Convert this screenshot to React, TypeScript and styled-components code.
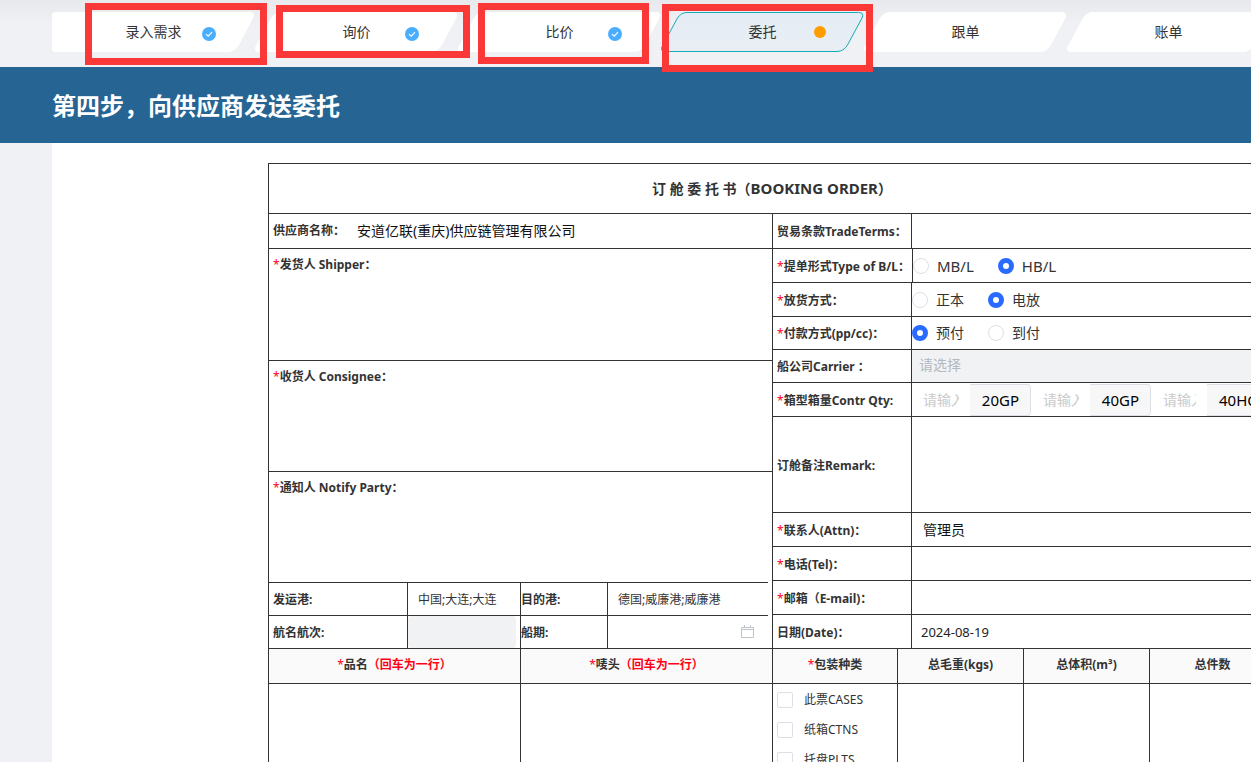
import React from 'react';
import styled, { createGlobalStyle, css } from 'styled-components';

const LINE = '#333333';
const BACKDROP = '#f0f1f5';
const MUTED = '#f1f2f4';
const FIELD_BORDER = '#dcdfe6';

const GlobalStyle = createGlobalStyle`
  *, *::before, *::after { box-sizing: border-box; }
  body {
    margin: 0;
    background: ${BACKDROP};
    color: #333;
    font-family: "Noto Sans", "Noto Sans CJK SC", sans-serif;
    font-size: 12px;
    line-height: 16px;
  }
  input, textarea, select, button { font: inherit; color: inherit; }
`;

const Page = styled.div`
  position: relative;
  height: 100vh;
  overflow: auto;
  scrollbar-width: none;
`;

const Canvas = styled.div`
  min-width: 1536px;
`;

/* ---------- step bar ---------- */

const StepBar = styled.nav`
  background: linear-gradient(#e8e9ed, ${BACKDROP} 24px);
  padding: 12px 52px 15px;
`;

const StepList = styled.ol`
  display: flex;
  margin: 0;
  padding: 0;
  list-style: none;
`;

const StepItem = styled.li`
  flex: 0 0 203px;
`;

const StepButton = styled.button`
  position: relative;
  display: grid;
  place-items: center;
  width: 100%;
  height: 40px;
  padding: 0;
  border: 0;
  background: none;
  font-size: 14px;
  line-height: 20px;
  cursor: pointer;
`;

const StepShape = styled.svg`
  position: absolute;
  inset: 0;
  width: 100%;
  height: 100%;
`;

const StepLabel = styled.span`
  position: relative;
`;

const StepBadge = styled.span<{ $kind: 'done' | 'current' }>`
  position: absolute;
  right: ${p => (p.$kind === 'done' ? 39 : 38)}px;
  top: ${p => (p.$kind === 'done' ? 15 : 14)}px;
  display: block;
  width: ${p => (p.$kind === 'done' ? 14 : 12)}px;
  height: ${p => (p.$kind === 'done' ? 14 : 12)}px;
  border-radius: 50%;
  background: ${p => (p.$kind === 'done' ? '#4aaeff' : '#ff9c00')};
  svg { display: block; }
`;

const Marker = styled.div<{ $x: number; $y: number; $w: number; $h: number }>`
  position: absolute;
  left: ${p => p.$x}px;
  top: ${p => p.$y}px;
  width: ${p => p.$w}px;
  height: ${p => p.$h}px;
  border: 7px solid #fb3838;
  pointer-events: none;
`;

/* ---------- banner ---------- */

const Banner = styled.header`
  padding: 21px 52px 19px;
  background: #266493;
`;

const BannerTitle = styled.h1`
  margin: 0;
  color: #fff;
  font-size: 24px;
  line-height: 36px;
  font-weight: 700;
`;

/* ---------- booking form ---------- */

const Sheet = styled.main`
  margin: 0 52px;
  padding: 20px 208px 20px 216px;
  background: #fff;
`;

const Order = styled.form`
  border: 1px solid ${LINE};
`;

const OrderTitle = styled.h2`
  margin: 0;
  padding: 15px 0 14px;
  border-bottom: 1px solid ${LINE};
  font-size: 14px;
  line-height: 20px;
  font-weight: 700;
  text-align: center;
`;

const TitleLatin = styled.span`
  font-size: 15px;
  line-height: 16px;
`;

const Columns = styled.div`
  display: grid;
  grid-template-columns: 504px 1fr;
`;

const LeftColumn = styled.div`
  border-right: 1px solid ${LINE};
`;

const RightColumn = styled.div`
  min-width: 0;
`;

const Star = styled.span`
  color: #ff0016;
  font-weight: 400;
`;

const Hint = styled.span`
  color: #ff0016;
`;

const labelText = css`
  font-size: 12px;
  line-height: 16px;
  font-weight: 700;
  white-space: nowrap;
`;

const SupplierRow = styled.div`
  display: grid;
  grid-template-columns: 73px 1fr;
  align-items: center;
  height: 35px;
  border-bottom: 1px solid ${LINE};
  padding-left: 4px;
`;

const Label = styled.label`
  ${labelText}
`;

const TextField = styled.input<{ $small?: boolean }>`
  width: 100%;
  min-width: 0;
  height: 100%;
  padding: ${p => (p.$small ? '0 10px' : '0 11px 2px')};
  border: 0;
  outline: 0;
  background: transparent;
  color: ${p => (p.$small ? '#333' : '#111')};
  font-size: ${p => (p.$small ? 12 : 14)}px;
`;

const Party = styled.div<{ $h: number; $inset?: boolean }>`
  display: flex;
  flex-direction: column;
  height: ${p => p.$h}px;
  margin-right: ${p => (p.$inset ? 4 : 0)}px;
  padding: 8px 4px 4px;
  border-bottom: 1px solid ${LINE};
`;

const Area = styled.textarea`
  display: block;
  flex: 1;
  width: 100%;
  height: 100%;
  padding: 4px 12px;
  border: 0;
  outline: 0;
  resize: none;
  background: transparent;
`;

const PortRow = styled.div<{ $last?: boolean }>`
  display: grid;
  grid-template-columns: 139px 113px 87px 1fr;
  height: 33px;
  margin-right: ${p => (p.$last ? 0 : 4)}px;
  border-bottom: 1px solid ${LINE};
`;

const PortCell = styled.div<{ $pad?: number; $open?: boolean }>`
  display: flex;
  align-items: center;
  min-width: 0;
  padding-left: ${p => p.$pad ?? 0}px;
  border-right: ${p => (p.$open ? 0 : 1)}px solid ${LINE};
  label { padding-top: 2px; }
`;

const DisabledField = styled.input`
  width: 108px;
  height: 32px;
  border: 0;
  border-radius: 4px;
  background: ${MUTED};
`;

const CalendarButton = styled.button`
  flex: none;
  width: 14px;
  height: 14px;
  margin-right: 17px;
  padding: 0;
  border: 0;
  background: none;
  svg { display: block; }
`;

const FieldRow = styled.div<{ $h: number; $labelWidth?: number }>`
  display: grid;
  grid-template-columns: ${p => p.$labelWidth ?? 139}px 1fr;
  height: ${p => p.$h}px;
  border-bottom: 1px solid ${LINE};
`;

const FieldName = styled.div`
  display: flex;
  align-items: center;
  padding: 2px 0 0 4px;
  border-right: 1px solid ${LINE};
  ${labelText}
`;

const FieldValue = styled.div`
  display: flex;
  align-items: center;
  min-width: 0;
`;

const RadioGroup = styled.div<{ $latin?: boolean }>`
  display: flex;
  gap: 24px;
  font-size: ${p => (p.$latin ? 15 : 14)}px;
  line-height: 20px;
`;

const RadioLabel = styled.label`
  display: flex;
  align-items: center;
  gap: 8px;
`;

const Radio = styled.input`
  appearance: none;
  width: 16px;
  height: 16px;
  margin: 0;
  border: 1px solid ${FIELD_BORDER};
  border-radius: 50%;
  background: #fff;
  &:checked { border: 5px solid #2a6bff; }
`;

const CarrierSelect = styled.select`
  appearance: none;
  width: 100%;
  height: 100%;
  padding: 0 7px 2px;
  border: 0;
  background: ${MUTED};
  color: #b4b8c0;
  font-size: 14px;
  opacity: 1;
`;

const Quantities = styled.div`
  display: flex;
  gap: 1px;
  width: 100%;
  height: 100%;
  padding-top: 1px;
`;

const Quantity = styled.div`
  display: flex;
  flex: 0 0 119px;
`;

const QuantityInput = styled.input`
  flex: 1;
  width: 0;
  min-width: 0;
  padding: 0 11px;
  border: 0;
  outline: 0;
  background: transparent;
  font-size: 14px;
  &::placeholder { color: #cacaca; }
`;

const QuantityUnit = styled.label`
  display: flex;
  align-items: center;
  padding: 0 11px 0 12px;
  border: 1px solid ${FIELD_BORDER};
  border-left: 0;
  border-radius: 0 4px 4px 0;
  background: #f7f7f7;
  color: #000;
  font-size: 15px;
`;

const DateText = styled(TextField)`
  padding: 0 9px;
  color: #222;
  font-size: 13px;
`;

/* ---------- goods table ---------- */

const Goods = styled.table`
  width: 100%;
  table-layout: fixed;
  border-spacing: 0;
`;

const GoodsHead = styled.th<{ $w?: number }>`
  width: ${p => (p.$w ? `${p.$w}px` : 'auto')};
  height: 35px;
  padding: 0 0 2px;
  border-bottom: 1px solid ${LINE};
  background: #fafafa;
  text-align: center;
  ${labelText}
  & + & { border-left: 1px solid ${LINE}; }
`;

const GoodsCell = styled.td`
  height: 220px;
  padding: 8px 4px;
  vertical-align: top;
  & + & { border-left: 1px solid ${LINE}; }
`;

const CheckList = styled.div`
  display: flex;
  flex-direction: column;
  gap: 14px;
`;

const CheckLabel = styled.label`
  display: flex;
  align-items: center;
  gap: 11px;
  white-space: nowrap;
`;

const Check = styled.input`
  appearance: none;
  flex: none;
  width: 16px;
  height: 16px;
  margin: 0;
  border: 1px solid ${FIELD_BORDER};
  border-radius: 2px;
  background: #fff;
  &:checked { background: #2a6bff; }
`;

type StepState = 'done' | 'current' | 'todo';

const steps: { name: string; state: StepState }[] = [
  { name: '录入需求', state: 'done' },
  { name: '询价', state: 'done' },
  { name: '比价', state: 'done' },
  { name: '委托', state: 'current' },
  { name: '跟单', state: 'todo' },
  { name: '账单', state: 'todo' },
];

const FIRST_SHAPE =
  'M4 0H198Q203.500 0 201.500 5L187 33Q183 40 176 40H4Q0 40 0 36V4Q0 0 4 0Z';
const SLANTED_SHAPE =
  'M26 .5H197.500Q203.500 .5 201 6L186.500 33Q182.500 39.500 176 39.500H4Q-1 39.500 1 34.500L16.500 6Q20 .5 26 .5Z';

const Step = ({ name, state, first }: { name: string; state: StepState; first: boolean }) => (
  <StepItem>
    <StepButton type="button" aria-current={state === 'current' ? 'step' : undefined}>
      <StepShape viewBox="0 0 203 40" preserveAspectRatio="none" aria-hidden="true">
        <defs>
          <linearGradient id="currentFill" x1="0" y1="0" x2="0" y2="1">
            <stop offset="0" stopColor="#e4ecf5" />
            <stop offset="1" stopColor="#e9eef4" />
          </linearGradient>
        </defs>
        <path
          d={first ? FIRST_SHAPE : SLANTED_SHAPE}
          fill={state === 'current' ? 'url(#currentFill)' : '#fff'}
          stroke={state === 'current' ? '#14abb4' : '#fff'}
          strokeWidth={first ? 0 : 1}
        />
      </StepShape>
      <StepLabel>{name}</StepLabel>
      {state === 'done' && (
        <StepBadge $kind="done">
          <svg width="14" height="14" viewBox="0 0 14 14" aria-hidden="true">
            <path d="M4 7.200l2.200 2L10 5.200" fill="none" stroke="#fff" strokeWidth="1.100" />
          </svg>
        </StepBadge>
      )}
      {state === 'current' && <StepBadge $kind="current" />}
    </StepButton>
  </StepItem>
);

const RadioRow = ({
  h, name, title, options, value, labelWidth, latin,
}: {
  h: number; name: string; title: string; options: string[]; value: string;
  labelWidth?: number; latin?: boolean;
}) => (
  <FieldRow $h={h} $labelWidth={labelWidth}>
    <FieldName id={`${name}-title`}><Star>*</Star>{title}</FieldName>
    <FieldValue>
      <RadioGroup $latin={latin} role="radiogroup" aria-labelledby={`${name}-title`}>
        {options.map(option => (
          <RadioLabel key={option}>
            <Radio type="radio" name={name} value={option} defaultChecked={option === value} />
            {option}
          </RadioLabel>
        ))}
      </RadioGroup>
    </FieldValue>
  </FieldRow>
);

const TextRow = ({
  id, title, required, h = 34, value = '',
}: {
  id: string; title: string; required?: boolean; h?: number; value?: string;
}) => (
  <FieldRow $h={h}>
    <FieldName>
      <Label htmlFor={id}>{required && <Star>*</Star>}{title}</Label>
    </FieldName>
    <FieldValue><TextField id={id} defaultValue={value} /></FieldValue>
  </FieldRow>
);

const PartyBox = ({
  id, title, h, inset,
}: {
  id: string; title: string; h: number; inset?: boolean;
}) => (
  <Party $h={h} $inset={inset}>
    <Label htmlFor={id}><Star>*</Star>{title}</Label>
    <Area id={id} />
  </Party>
);

export default function App() {
  return (
    <Page>
      <GlobalStyle />
      <Canvas>
        <StepBar>
          <StepList>
            {steps.map((s, i) => (
              <Step key={s.name} name={s.name} state={s.state} first={i === 0} />
            ))}
          </StepList>
        </StepBar>
        <Banner>
          <BannerTitle>第四步，向供应商发送委托</BannerTitle>
        </Banner>
        <Sheet>
          <Order>
            <OrderTitle>订 舱 委 托 书（<TitleLatin>BOOKING ORDER</TitleLatin>）</OrderTitle>
            <Columns>
              <LeftColumn>
                <SupplierRow>
                  <Label htmlFor="supplier">供应商名称：</Label>
                  <TextField id="supplier" defaultValue="安道亿联(重庆)供应链管理有限公司" />
                </SupplierRow>
                <PartyBox id="shipper" title="发货人 Shipper：" h={112} />
                <PartyBox id="consignee" title="收货人 Consignee：" h={111} />
                <PartyBox id="notify" title="通知人 Notify Party：" h={111} inset />
                <PortRow>
                  <PortCell $pad={4}><Label htmlFor="pol">发运港:</Label></PortCell>
                  <PortCell><TextField $small id="pol" defaultValue="中国;大连;大连" /></PortCell>
                  <PortCell><Label htmlFor="pod">目的港:</Label></PortCell>
                  <PortCell $open><TextField $small id="pod" defaultValue="德国;威廉港;威廉港" /></PortCell>
                </PortRow>
                <PortRow $last>
                  <PortCell $pad={4}><Label htmlFor="voyage">航名航次:</Label></PortCell>
                  <PortCell><DisabledField id="voyage" disabled /></PortCell>
                  <PortCell><Label htmlFor="sailing">船期:</Label></PortCell>
                  <PortCell $open>
                    <TextField $small id="sailing" />
                    <CalendarButton type="button" aria-label="船期">
                      <svg width="14" height="14" viewBox="0 0 14 14" aria-hidden="true">
                        <path
                          d="M.5 2.500h12v10H.5zM.5 4.500h12M3.500 0v2M9.500 0v2"
                          fill="none"
                          stroke="#c0c4cc"
                        />
                      </svg>
                    </CalendarButton>
                  </PortCell>
                </PortRow>
              </LeftColumn>
              <RightColumn>
                <TextRow id="terms" title="贸易条款TradeTerms：" h={35} />
                <RadioRow h={34} labelWidth={140} latin name="bl" title="提单形式Type of B/L：" options={['MB/L', 'HB/L']} value="HB/L" />
                <RadioRow h={34} name="release" title="放货方式：" options={['正本', '电放']} value="电放" />
                <RadioRow h={33} name="payment" title="付款方式(pp/cc)：" options={['预付', '到付']} value="预付" />
                <FieldRow $h={33}>
                  <FieldName><Label htmlFor="carrier">船公司Carrier ：</Label></FieldName>
                  <FieldValue>
                    <CarrierSelect id="carrier" disabled>
                      <option>请选择</option>
                    </CarrierSelect>
                  </FieldValue>
                </FieldRow>
                <FieldRow $h={34}>
                  <FieldName><span><Star>*</Star>箱型箱量Contr Qty:</span></FieldName>
                  <FieldValue>
                    <Quantities>
                      {['20GP', '40GP', '40HQ'].map(unit => (
                        <Quantity key={unit}>
                          <QuantityInput id={`qty-${unit}`} placeholder="请输入" />
                          <QuantityUnit htmlFor={`qty-${unit}`}>{unit}</QuantityUnit>
                        </Quantity>
                      ))}
                    </Quantities>
                  </FieldValue>
                </FieldRow>
                <FieldRow $h={96}>
                  <FieldName><Label htmlFor="remark">订舱备注Remark:</Label></FieldName>
                  <FieldValue><Area id="remark" /></FieldValue>
                </FieldRow>
                <TextRow id="attn" title="联系人(Attn)：" required value="管理员" />
                <TextRow id="tel" title="电话(Tel)：" required />
                <TextRow id="email" title="邮箱（E-mail)：" required />
                <FieldRow $h={34}>
                  <FieldName><Label htmlFor="date">日期(Date)：</Label></FieldName>
                  <FieldValue><DateText id="date" defaultValue="2024-08-19" /></FieldValue>
                </FieldRow>
              </RightColumn>
            </Columns>
            <Goods>
              <thead>
                <tr>
                  <GoodsHead $w={251}><Star>*</Star>品名<Hint>（回车为一行）</Hint></GoodsHead>
                  <GoodsHead $w={252}><Star>*</Star>唛头<Hint>（回车为一行）</Hint></GoodsHead>
                  <GoodsHead $w={125}><Star>*</Star>包装种类</GoodsHead>
                  <GoodsHead $w={126}>总毛重(kgs)</GoodsHead>
                  <GoodsHead $w={126}>总体积(m³)</GoodsHead>
                  <GoodsHead>总件数</GoodsHead>
                </tr>
              </thead>
              <tbody>
                <tr>
                  <GoodsCell />
                  <GoodsCell />
                  <GoodsCell>
                    <CheckList>
                      {['此票CASES', '纸箱CTNS', '托盘PLTS'].map(kind => (
                        <CheckLabel key={kind}>
                          <Check type="checkbox" />
                          {kind}
                        </CheckLabel>
                      ))}
                    </CheckList>
                  </GoodsCell>
                  <GoodsCell />
                  <GoodsCell />
                  <GoodsCell />
                </tr>
              </tbody>
            </Goods>
          </Order>
        </Sheet>
      </Canvas>
      <Marker $x={85} $y={3} $w={182} $h={62} />
      <Marker $x={276} $y={5} $w={194} $h={53} />
      <Marker $x={478} $y={3} $w={171} $h={61} />
      <Marker $x={662} $y={4} $w={211} $h={68} />
    </Page>
  );
}
